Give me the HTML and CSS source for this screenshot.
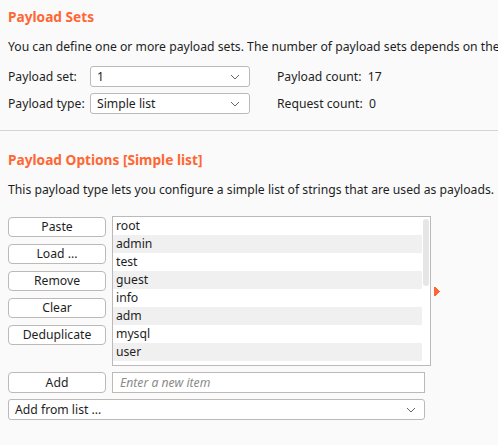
FILE: index.html
```html
<!DOCTYPE html>
<html>
<head>
<meta charset="utf-8">
<link rel="stylesheet" href="styles.css">
</head>
<body>
<section class="sets">
  <h2 class="title">Payload Sets</h2>
  <p class="desc">You can define one or more payload sets. The number of payload sets depends on the attack type defined in the Positions tab.</p>
  <div class="setgrid">
    <span class="lbl">Payload set:</span>
    <div class="select"><span>1</span><svg class="chev" viewBox="0 0 10 6"><path d="M1 1 L5 5 L9 1" fill="none" stroke="#666" stroke-width="1"/></svg></div>
    <span class="stat">Payload count:&nbsp; 17</span>
    <span class="lbl">Payload type:</span>
    <div class="select"><span>Simple list</span><svg class="chev" viewBox="0 0 10 6"><path d="M1 1 L5 5 L9 1" fill="none" stroke="#666" stroke-width="1"/></svg></div>
    <span class="stat">Request count:&nbsp; 0</span>
  </div>
</section>
<hr class="sep">
<section class="options">
  <h2 class="title">Payload Options [Simple list]</h2>
  <p class="desc">This payload type lets you configure a simple list of strings that are used as payloads.</p>
  <div class="listrow">
    <div class="btns">
      <button class="btn">Paste</button>
      <button class="btn">Load ...</button>
      <button class="btn">Remove</button>
      <button class="btn">Clear</button>
      <button class="btn">Deduplicate</button>
    </div>
    <div class="list">
      <div class="items">
        <div class="item">root</div>
        <div class="item alt">admin</div>
        <div class="item">test</div>
        <div class="item alt">guest</div>
        <div class="item">info</div>
        <div class="item alt">adm</div>
        <div class="item">mysql</div>
        <div class="item alt">user</div>
      </div>
      <div class="track"><div class="thumb"></div></div>
    </div>
    <svg class="arrow" viewBox="0 0 8 9"><path d="M0 0 H2 V1 H3 V2 H4 V3 H5 V4 H6 V5 H5 V6 H4 V7 H3 V8 H2 V9 H0 Z" fill="#ff6633"/></svg>
  </div>
  <div class="addrow">
    <button class="btn">Add</button>
    <div class="input">Enter a new item</div>
  </div>
  <div class="select wide"><span>Add from list ...</span><svg class="chev" viewBox="0 0 10 6"><path d="M1 1 L5 5 L9 1" fill="none" stroke="#666" stroke-width="1"/></svg></div>
</section>
</body>
</html>
```
FILE: styles.css
```css
html, body {
  margin: 0;
  padding: 0;
  background: #fafafa;
  overflow: hidden;
}
body {
  font-family: "Noto Sans", "Open Sans", sans-serif;
  font-size: 12.2px;
  color: #1e1e1e;
  width: 498px;
  height: 445px;
}
.title {
  margin: 0;
  font-size: 13.7px;
  font-weight: bold;
  color: #ff6633;
  line-height: 18px;
}
.sets {
  padding: 8px 0 0 8px;
}
.desc {
  margin: 12px 0 0 0;
  white-space: nowrap;
  line-height: 18px;
}
.setgrid {
  margin-top: 10px;
  display: grid;
  grid-template-columns: 82px 160px auto;
  grid-auto-rows: 21px;
  row-gap: 6px;
  align-items: center;
}
.lbl { line-height: 21px; }
.stat { padding-left: 27px; line-height: 21px; }
.select {
  box-sizing: border-box;
  height: 21px;
  border: 1px solid #bdb9b9;
  border-radius: 3px;
  background: #fff;
  display: flex;
  align-items: center;
  justify-content: space-between;
  padding: 0 9px 0 6px;
}
.chev { width: 10px; height: 6px; }
.sep {
  margin: 16px 0 0 0;
  border: 0;
  border-top: 1px solid #d4d4d4;
  height: 0;
}
.options {
  padding: 20px 0 0 8px;
}
.options .desc { margin-top: 12px; }
.listrow {
  margin-top: 17px;
  display: flex;
  align-items: flex-start;
  height: 150px;
}
.btns {
  display: flex;
  flex-direction: column;
  gap: 7px;
  padding-top: 1px;
}
.btn {
  box-sizing: border-box;
  width: 98px;
  height: 20px;
  border: 1px solid #bdb9b9;
  border-radius: 4px;
  background: #fff;
  font: inherit;
  color: #1e1e1e;
  padding: 0;
  line-height: 18px;
}
.list {
  margin-left: 6px;
  box-sizing: border-box;
  width: 319px;
  height: 150px;
  border: 1px solid #bdb9b9;
  background: #fff;
  display: flex;
  padding: 0 1px 0 0;
}
.items { width: 309px; }
.item {
  height: 18px;
  line-height: 18px;
  padding-left: 3px;
}
.item.alt { background: #f0f0f0; }
.track {
  padding: 2px 0 0 1px;
  flex: 1;
}
.thumb {
  width: 6px;
  height: 67px;
  background: #e6e6e6;
  border-radius: 3px;
}
.arrow {
  width: 8px;
  height: 9px;
  margin: 71px 0 0 3px;
}
.addrow {
  margin-top: 6px;
  display: flex;
  gap: 6px;
}
.addrow .btn { height: 21px; }
.input {
  box-sizing: border-box;
  width: 313px;
  height: 21px;
  border: 1px solid #bdb9b9;
  background: #fff;
  color: #8a8a8a;
  font-style: italic;
  padding-left: 7px;
  line-height: 19px;
}
.select.wide {
  margin-top: 6px;
  width: 417px;
  padding-left: 6px;
  padding-right: 8px;
}
```
